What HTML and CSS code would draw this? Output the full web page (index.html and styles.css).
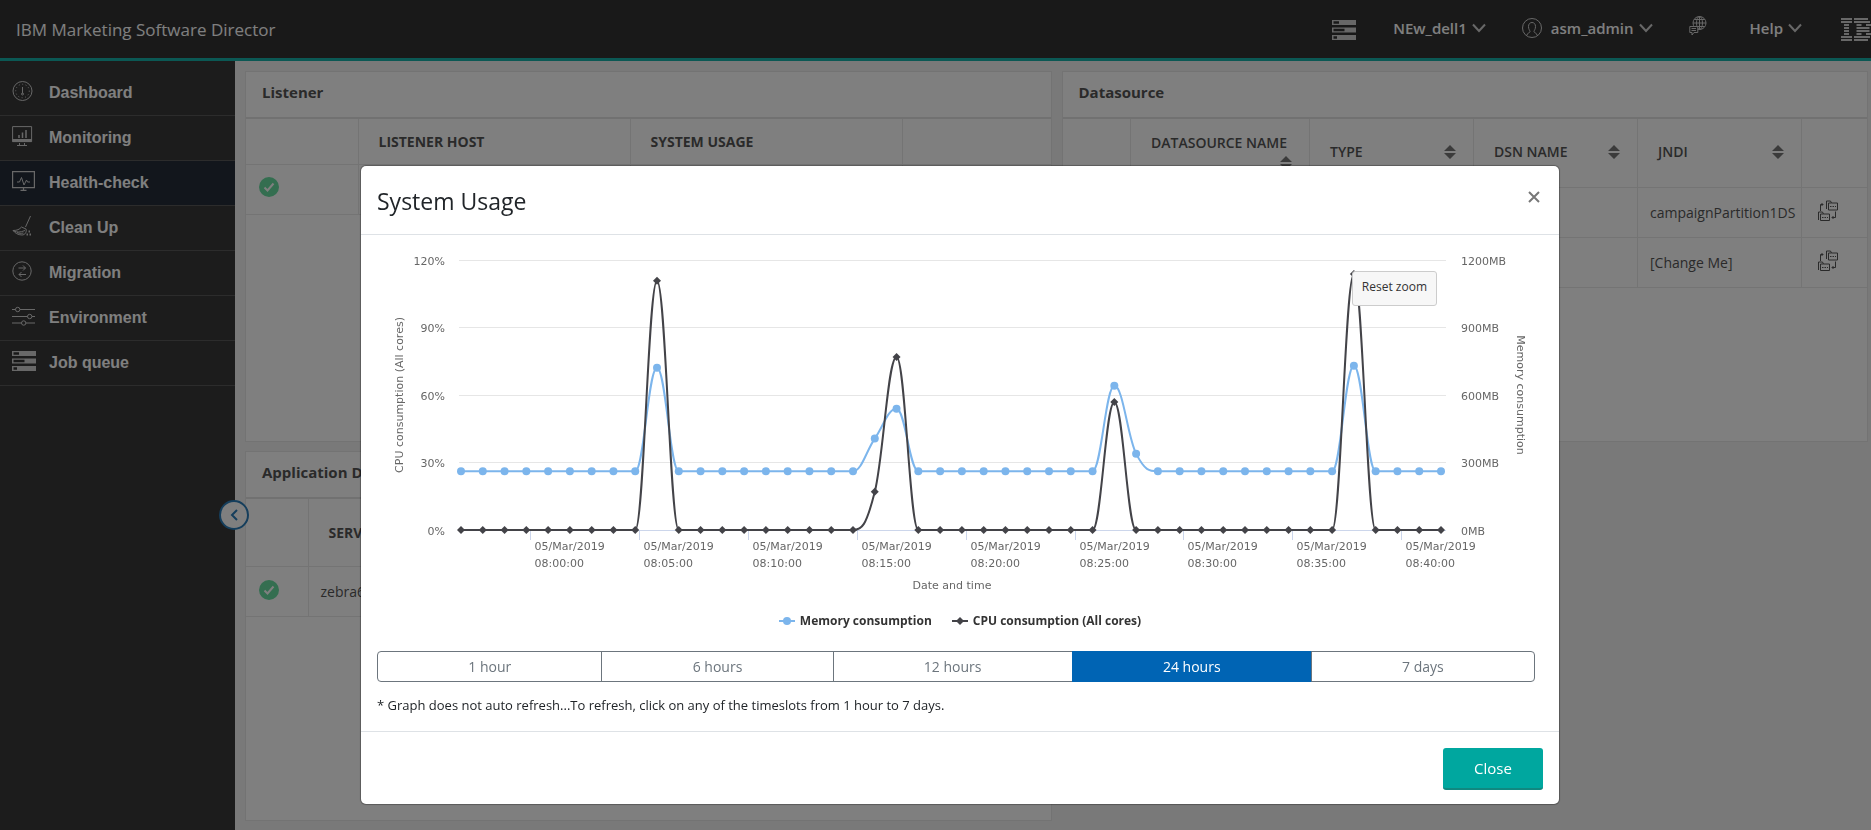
FILE: index.html
```html
<!DOCTYPE html>
<html lang="en">
<head>
<meta charset="utf-8">
<title>IBM Marketing Software Director</title>
<link rel="stylesheet" href="styles.css">
</head>
<body>
<svg class="defs" aria-hidden="true">
  <symbol id="queue" viewBox="0 0 24 20">
    <path fill="currentColor" d="M0 0h24v5H0zM0 7.500h24v5H0zM0 15h24v5H0z"/>
    <path class="notch" d="M1.500 1.300H7v2.400H1.500zM1.500 8.800h11v2.400h-11zM1.500 16.300H5v2.400H1.500z"/>
  </symbol>
  <symbol id="chevron" viewBox="0 0 14 10"><path d="M1 1.500l6 6.500 6-6.500" fill="none" stroke="currentColor" stroke-width="2"/></symbol>
  <symbol id="ok" viewBox="0 0 20 20"><circle cx="10" cy="10" r="10" fill="#68dca0"/><path d="M5.500 10.500l3 3 6-7" fill="none" stroke="#fff" stroke-width="2"/></symbol>
  <symbol id="sort" viewBox="0 0 12 14"><path fill="currentColor" d="M6 0l6 6H0zM6 14L0 8h12z"/></symbol>
  <symbol id="transfer" viewBox="0 0 20 21">
    <g fill="none" stroke="currentColor">
      <path d="M8.500 9V1h4l1 2h6v7h-9V3h3M.500 20v-8h4l1 2h6v6.500h-9V14h3M2.500 11V4.500H5M3.500 3L5 4.500 3.500 6M17.500 11.500v6H14M15.500 16L14 17.500l1.500 1.500"/>
      <path stroke-dasharray="1.500 1" d="M12 6.500h6M4 17.500h6"/>
    </g>
  </symbol>
</svg>

<header class="topbar">
  <h1 class="brand">IBM Marketing Software Director</h1>
  <nav class="tools" aria-label="Account">
    <button class="tool tool-queue" aria-label="Job queue"><svg width="24" height="20"><use href="#queue"/></svg></button>
    <button class="tool tool-server">NEw_dell1<svg width="14" height="10"><use href="#chevron"/></svg></button>
    <button class="tool tool-user">
      <svg class="avatar" width="20" height="20" viewBox="0 0 20 20" fill="none" stroke="currentColor"><circle cx="10" cy="10" r="9.500"/><path d="M5 17c0-2 3-2 3-3.500 0-1-1.500-2-1.500-5C6.500 6 8 4.500 10 4.500s3.500 1.500 3.500 4c0 3-1.500 4-1.500 5 0 1.500 3 1.500 3 3.500"/></svg>asm_admin<svg width="14" height="10"><use href="#chevron"/></svg>
    </button>
    <button class="tool tool-lang" aria-label="Language">
      <svg width="18" height="20" viewBox="0 0 18 20" fill="none" stroke="currentColor"><circle cx="10.500" cy="7" r="6.500"/><ellipse cx="10.500" cy="7" rx="3" ry="6.500"/><path d="M4 7h13M10.500.500v13M5.300 3.500h10.400M5.300 10.500h10.400"/><path class="bubble" d="M.800 10.500h8v6H5L3 19v-2.500H.800z"/><path d="M2.500 12.500H7M2.500 14.500H7"/></svg>
    </button>
    <button class="tool tool-help">Help<svg width="14" height="10"><use href="#chevron"/></svg></button>
    <svg class="logo" width="30" height="23" viewBox="0 0 30 23" role="img" aria-label="IBM" stroke="currentColor" stroke-width="1.900">
      <path d="M0 1h11M0 4h11M3 7h5M3 10h5M3 13h5M3 16h5M0 19h11M0 22h11M13 1h14M13 4h16M15.500 7h5M25 7h5M15.500 10h13M15.500 13h13M15.500 16h5M25 16h5M13 19h16M13 22h14"/>
    </svg>
  </nav>
</header>

<div class="layout">
  <nav class="sidebar" aria-label="Main">
    <a href="#" class="nav-item"><svg width="24" height="20" viewBox="0 0 24 20" fill="none" stroke="currentColor"><circle cx="10.500" cy="10" r="9.500"/><circle cx="10.500" cy="10" r="6.800" stroke-dasharray="1 2.500"/><path d="M10.500 6v6.500"/><circle cx="10.500" cy="13" r="1"/></svg>Dashboard</a>
    <a href="#" class="nav-item"><svg width="24" height="20" viewBox="0 0 24 20" fill="none" stroke="currentColor"><path d="M.600.600h19v15h-19z"/><path stroke-width="3" d="M.500 14.500h19"/><path d="M7.500 17v2M12.500 17v2M5 19.500h10"/><path stroke-width="1.500" d="M7 12V9M10.500 12V6.500M14 12V4"/></svg>Monitoring</a>
    <a href="#" class="nav-item active"><svg width="24" height="20" viewBox="0 0 24 20" fill="none" stroke="currentColor"><path stroke-width="1.200" d="M.600.600h21.800v16H.600zM11.500 17v2.500M8.500 19.400h6"/><path d="M5 11h2.500l2-4.500 2.500 7.500 2.500-5 1 2H18"/></svg>Health-check</a>
    <a href="#" class="nav-item"><svg width="24" height="20" viewBox="0 0 24 20" fill="none" stroke="currentColor"><path d="M18.500 0l-5 11M1 14.500c4 0 6.500-1 8.500-3.500l4.500 2c1 3-1 6-4 6-4 0-7-2-9-4.500zM2 15c3 1.500 6 1.500 11-.500M5 16.500c2 1 4 1 6.500.500"/><path stroke-width="2" stroke-dasharray="1.500 1.500" d="M14.500 18.500H19M16.500 15.500h1.500"/></svg>Clean Up</a>
    <a href="#" class="nav-item"><svg width="24" height="20" viewBox="0 0 24 20" fill="none" stroke="currentColor"><circle cx="10" cy="10" r="9.200"/><path d="M6.500 7h7M11 4.500L13.500 7 11 9.500M14 13.500H7M9.500 11L7 13.500 9.500 16"/></svg>Migration</a>
    <a href="#" class="nav-item"><svg width="24" height="20" viewBox="0 0 24 20" fill="none" stroke="currentColor"><path d="M0 3.500h3.500M8 3.500h15M0 10.500h15.500M20 10.500h3M0 17h9.500M14 17h9"/><circle cx="5.700" cy="3.500" r="2.200"/><circle cx="17.700" cy="10.500" r="2.200"/><circle cx="11.700" cy="17" r="2.200"/></svg>Environment</a>
    <a href="#" class="nav-item"><svg width="24" height="20"><use href="#queue"/></svg>Job queue</a>
    <button class="collapse" aria-label="Collapse menu"><svg width="10" height="12" viewBox="0 0 10 12" fill="none" stroke="currentColor" stroke-width="2"><path d="M8 1L3 6l5 5"/></svg></button>
  </nav>

  <main class="panels">
    <section class="panel">
      <h2 class="panel-title">Listener</h2>
      <table class="grid grid-listener">
        <colgroup><col class="c-status"><col class="c-wide"><col class="c-wide"><col></colgroup>
        <thead><tr><th></th><th>LISTENER HOST</th><th>SYSTEM USAGE</th><th></th></tr></thead>
        <tbody><tr><td><svg class="ok" width="20" height="20"><use href="#ok"/></svg></td><td></td><td></td><td></td></tr></tbody>
      </table>
    </section>

    <section class="panel">
      <h2 class="panel-title">Datasource</h2>
      <table class="grid grid-source">
        <colgroup><col class="c-narrow"><col class="c-name"><col class="c-mid"><col class="c-mid"><col class="c-mid"><col></colgroup>
        <thead><tr>
          <th></th>
          <th><div class="sortable wrap">DATASOURCE NAME<svg width="12" height="14"><use href="#sort"/></svg></div></th>
          <th><div class="sortable">TYPE<svg width="12" height="14"><use href="#sort"/></svg></div></th>
          <th><div class="sortable">DSN NAME<svg width="12" height="14"><use href="#sort"/></svg></div></th>
          <th><div class="sortable">JNDI<svg width="12" height="14"><use href="#sort"/></svg></div></th>
          <th></th>
        </tr></thead>
        <tbody>
          <tr><td></td><td></td><td></td><td></td><td>campaignPartition1DS</td><td><svg class="transfer" width="20" height="21"><use href="#transfer"/></svg></td></tr>
          <tr><td></td><td></td><td></td><td></td><td>[Change Me]</td><td><svg class="transfer" width="20" height="21"><use href="#transfer"/></svg></td></tr>
        </tbody>
      </table>
    </section>

    <section class="panel">
      <h2 class="panel-title">Application Details</h2>
      <table class="grid grid-app">
        <colgroup><col class="c-small"><col></colgroup>
        <thead><tr><th></th><th>SERVER</th></tr></thead>
        <tbody><tr><td><svg class="ok" width="20" height="20"><use href="#ok"/></svg></td><td>zebra6</td></tr></tbody>
      </table>
    </section>
  </main>
</div>

<div class="backdrop">
  <div class="modal" role="dialog" aria-modal="true" aria-labelledby="modal-title">
    <div class="modal-head">
      <h2 class="modal-title" id="modal-title">System Usage</h2>
      <button class="modal-x" aria-label="Close dialog"><svg width="12" height="12" viewBox="0 0 12 12" stroke="currentColor" stroke-width="2"><path d="M1 1l10 10M11 1L1 11"/></svg></button>
    </div>
    <div class="modal-body">
      <div class="chart">
        <svg id="plot" viewBox="0 0 1166 350" role="img" aria-label="Memory and CPU consumption over time"></svg>
        <button class="reset">Reset zoom</button>
      </div>
      <ul class="legend">
        <li><svg width="16" height="12" viewBox="0 0 16 12"><path d="M0 6h16" stroke="#7cb5ec" stroke-width="2"/><circle cx="8" cy="6" r="4" fill="#7cb5ec"/></svg>Memory consumption</li>
        <li><svg width="16" height="12" viewBox="0 0 16 12"><path d="M0 6h16" stroke="#434348" stroke-width="2"/><path d="M8 2l4 4-4 4-4-4z" fill="#434348"/></svg>CPU consumption (All cores)</li>
      </ul>
      <div class="ranges">
        <button>1 hour</button><button>6 hours</button><button>12 hours</button><button class="on" aria-pressed="true">24 hours</button><button>7 days</button>
      </div>
      <p class="note">* Graph does not auto refresh...To refresh, click on any of the timeslots from 1 hour to 7 days.</p>
    </div>
    <div class="modal-foot"><button class="close">Close</button></div>
  </div>
</div>
<script src="chart.js"></script>
</body>
</html>
```

FILE: styles.css
```css
* { box-sizing: border-box; }

body {
  margin: 0;
  height: 100vh;
  overflow: hidden;
  display: flex;
  flex-direction: column;
  background: #f2f2f2;
  color: #555;
  font-family: "Open Sans", "Noto Sans", sans-serif;
  font-size: 14px;
}

button { font: inherit; color: inherit; background: none; border: 0; padding: 0; cursor: pointer; }
svg { flex: none; }
.defs { position: absolute; width: 0; height: 0; }

/* Top bar */
.topbar {
  display: flex;
  align-items: center;
  justify-content: space-between;
  height: 61px;
  flex: none;
  padding-left: 16px;
  background: #333;
  color: #fff;
  border-bottom: 3px solid #16b0a8;
}
.brand { margin: 0; font-size: 17px; font-weight: 400; }
.tools { display: flex; align-items: center; font-size: 15px; font-weight: 600; }
.tool { display: flex; align-items: center; gap: 5px; white-space: nowrap; padding-bottom: 2px; }
.tool-queue { margin-right: 37px; padding: 2px 0 0; }
.tool-server { margin-right: 36px; }
.tool-user { margin-right: 36px; }
.tool-lang { margin-right: 43px; padding-bottom: 6px; }
.tool-help { margin-right: 39px; }
.avatar { margin-right: 4px; }
.tool svg, .logo { color: #d0d0d0; }
.notch, .bubble { fill: #333; }

/* Side navigation */
.layout { display: flex; flex: 1; min-height: 0; }
.sidebar { position: relative; width: 235px; flex: none; padding-top: 10px; background: #383838; }
.nav-item {
  display: flex;
  align-items: center;
  gap: 13px;
  height: 45px;
  padding-left: 12px;
  border-bottom: 1px solid #585858;
  color: #fff;
  font: bold 16px "Liberation Sans", sans-serif;
  text-decoration: none;
}
.nav-item svg { margin-bottom: 4px; color: #d0d0d0; }
.nav-item.active { background: #242c38; }
.collapse {
  position: absolute;
  right: -14px;
  top: 439px;
  width: 30px;
  height: 30px;
  display: flex;
  align-items: center;
  justify-content: center;
  border: 2px solid #2a7cb8;
  border-radius: 50%;
  background: #fff;
  color: #2a7cb8;
}

/* Panels */
.panels {
  flex: 1;
  display: grid;
  grid-template-columns: 1fr 1fr;
  grid-template-rows: 1fr 1fr;
  gap: 9px 10px;
  padding: 10px 3px 9px 10px;
}
.panel { background: #fff; border: 1px solid #e6e6e6; overflow: hidden; }
.panel-title {
  margin: 0;
  padding: 0 16px 4px;
  font-size: 15px;
  font-weight: 700;
  line-height: 41px;
  border-bottom: 2px solid #e2e2e2;
}

.grid { width: 100%; table-layout: fixed; border-collapse: collapse; }
.grid th, .grid td { border-right: 1px solid #e9e9e9; border-bottom: 1px solid #e9e9e9; text-align: left; }
.grid th { height: 45px; padding: 0 20px; font-size: 14px; font-weight: 700; }
.grid td { height: 50px; padding: 0 0 0 12px; white-space: nowrap; }
.grid tr > :last-child { border-right: 0; }
.grid-source th, .grid-app th { height: 68px; }
.grid-source th { font-weight: 600; }
.c-status { width: 112px; }
.c-wide { width: 272px; }
.c-narrow { width: 68px; }
.c-name { width: 179px; }
.c-mid { width: 164px; }
.c-small { width: 62px; }
.sortable { display: flex; align-items: center; justify-content: space-between; padding-bottom: 2px; }
.sortable.wrap { flex-direction: column; align-items: flex-start; gap: 4px; white-space: nowrap; }
.sortable.wrap svg { align-self: flex-end; }
.sortable svg { color: #777; margin-right: -3px; }
.ok, .transfer { display: block; margin-bottom: 4px; }
.ok { margin-left: 1px; }
.transfer { margin-left: 4px; }

/* Dialog */
.backdrop { position: fixed; inset: 0; padding: 166px 312px 0 361px; background: rgba(0, 0, 0, .5); }
.modal { background: #fff; border-radius: 5px; color: #212529; box-shadow: 0 0 1px 1px rgba(0, 0, 0, .3); }
.modal-head {
  display: flex;
  align-items: center;
  justify-content: space-between;
  height: 69px;
  padding: 2px 16px 0;
  border-bottom: 1px solid #dee2e6;
}
.modal-title { margin: 0; font-size: 23px; font-weight: 500; }
.modal-x { display: flex; margin-right: 3px; padding-bottom: 8px; color: #777; }
.modal-body { padding: 16px; }

.chart { position: relative; font-size: 12px; }
.chart > svg { display: block; width: 100%; }
.gridline { stroke: #e6e6e6; }
.axis { stroke: #ccd6eb; }
.label { fill: #666; font: 11px "DejaVu Sans", sans-serif; }
.reset {
  position: absolute;
  top: 20px;
  right: 106px;
  padding: 0 9px 4px;
  line-height: 29px;
  border: 1px solid #ccc;
  border-radius: 3px;
  background: #f7f7f7;
  color: #333;
}
.legend {
  display: flex;
  justify-content: center;
  gap: 20px;
  margin: 10px 0 21px;
  padding: 0;
  list-style: none;
  font-size: 12px;
  font-weight: 700;
  line-height: 19px;
  color: #333;
}
.legend li { display: flex; align-items: center; gap: 5px; }
.ranges { display: flex; margin-right: 8px; }
.ranges button { flex: 1 1 auto; height: 31px; border: 1px solid #6c757d; margin-left: -1px; color: #6c757d; }
.ranges button:first-child { margin-left: 0; border-radius: 4px 0 0 4px; }
.ranges button:last-child { border-radius: 0 4px 4px 0; }
.ranges .on { background: #0064b4; border-color: #0064b4; color: #fff; }
.note { margin: 14px 0 0; font-size: 13px; line-height: 19px; }
.modal-foot { display: flex; justify-content: flex-end; padding: 16px 16px 14px; border-top: 1px solid #dee2e6; }
.close { width: 100px; height: 42px; border-radius: 3px; border-bottom: 2px solid #108880; background: #00a79f; color: #fff; font-size: 15px; }
```

FILE: chart.js
```js
(function () {
  const NS = "http://www.w3.org/2000/svg";
  const svg = document.getElementById("plot");
  const plot = { left: 82, right: 1069, top: 9.5, bottom: 279, first: 84, step: 980 / 45 };
  const memory = Array(46).fill(262);
  const cpu = Array(46).fill(0);
  Object.assign(memory, { 9: 722, 19: 407, 20: 540, 30: 642, 31: 340, 41: 731 });
  Object.assign(cpu, { 9: 111, 19: 17, 20: 77, 30: 57, 41: 114 });

  function add(tag, attrs, text) {
    const el = document.createElementNS(NS, tag);
    for (const key in attrs) el.setAttribute(key, attrs[key]);
    if (text !== undefined) el.textContent = text;
    svg.appendChild(el);
  }

  function points(values, max) {
    return values.map((v, i) => [plot.first + i * plot.step, plot.bottom - v / max * (plot.bottom - plot.top)]);
  }

  // Smooth curve whose control points never overshoot a neighbouring value.
  function spline(pts) {
    const s = 1.5, d = s + 1;
    let path = "M" + pts[0], right = pts[0];
    for (let i = 1; i < pts.length; i++) {
      const [px, py] = pts[i - 1], [x, y] = pts[i], next = pts[i + 1];
      let left = [x, y], out = [x, y];
      if (next) {
        const [nx, ny] = next;
        const lx = (s * x + px) / d, rx = (s * x + nx) / d;
        let ly = (s * y + py) / d, ry = (s * y + ny) / d;
        const fix = (ry - ly) * (rx - x) / (rx - lx) + y - ry;
        ly += fix;
        ry += fix;
        if (ly > py && ly > y) { ly = Math.max(py, y); ry = 2 * y - ly; }
        else if (ly < py && ly < y) { ly = Math.min(py, y); ry = 2 * y - ly; }
        if (ry > ny && ry > y) { ry = Math.max(ny, y); ly = 2 * y - ry; }
        else if (ry < ny && ry < y) { ry = Math.min(ny, y); ly = 2 * y - ry; }
        left = [lx, ly];
        out = [rx, ry];
      }
      path += "C" + right + " " + left + " " + [x, y];
      right = out;
    }
    return path;
  }

  [120, 90, 60, 30, 0].forEach(function (value, i) {
    const y = Math.floor(plot.top + i * 67.4) + 0.5;
    add("path", { class: value ? "gridline" : "axis", d: `M${plot.left} ${y}H${plot.right}` });
    add("text", { class: "label", x: 68, y: y + 4, "text-anchor": "end" }, value + "%");
    add("text", { class: "label", x: 1084, y: y + 4 }, value * 10 + "MB");
  });

  ["08:00", "08:05", "08:10", "08:15", "08:20", "08:25", "08:30", "08:35", "08:40"].forEach(function (time, i) {
    const x = Math.floor(153.5 + i * 108.9) + 0.5;
    add("path", { class: "axis", d: `M${x} 280v9` });
    add("text", { class: "label", x: x + 4, y: 299 }, "05/Mar/2019");
    add("text", { class: "label", x: x + 4, y: 316 }, time + ":00");
  });

  add("text", { class: "label", "text-anchor": "middle", transform: "translate(26 144) rotate(-90)" }, "CPU consumption (All cores)");
  add("text", { class: "label", "text-anchor": "middle", transform: "translate(1140 144) rotate(90)" }, "Memory consumption");
  add("text", { class: "label", "text-anchor": "middle", x: 575, y: 338 }, "Date and time");

  const mem = points(memory, 1200), load = points(cpu, 120);
  add("path", { d: spline(mem), fill: "none", stroke: "#7cb5ec", "stroke-width": 2 });
  mem.forEach(([x, y]) => add("circle", { cx: x, cy: y, r: 4, fill: "#7cb5ec" }));
  add("path", { d: spline(load), fill: "none", stroke: "#434348", "stroke-width": 2 });
  load.forEach(([x, y]) => add("path", { d: `M${x} ${y - 4}l4 4-4 4-4-4z`, fill: "#434348" }));
})();
```
